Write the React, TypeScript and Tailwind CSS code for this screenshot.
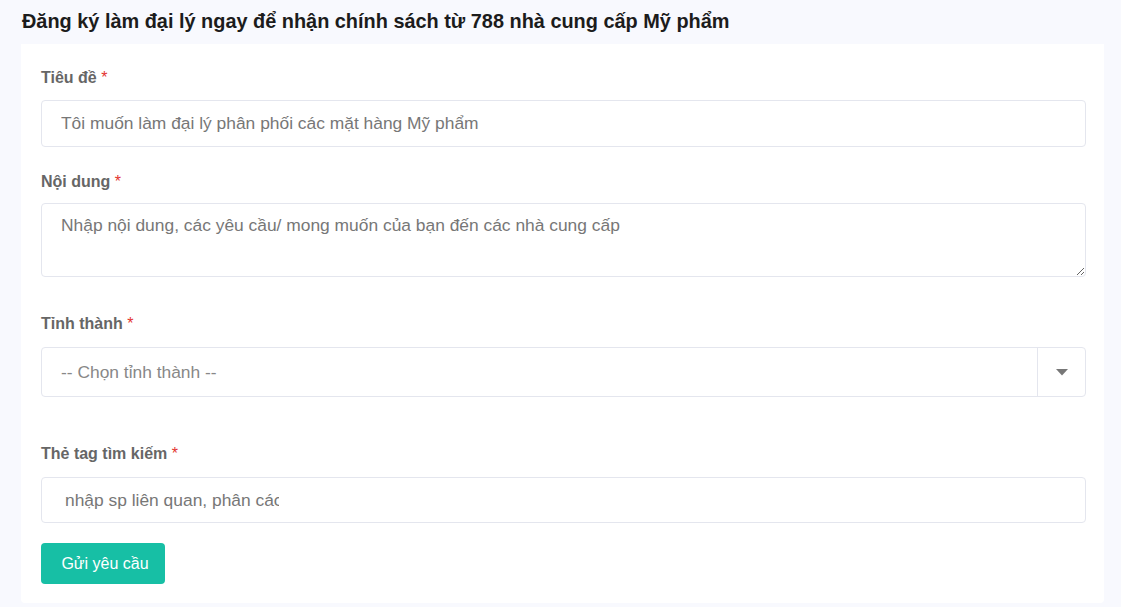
import * as React from "react";

function Label({ text }: { text: string }) {
  return (
    <div className="h-5 text-[16px] font-bold leading-5 text-[#666]">
      {text} <span className="font-normal text-[#e3342f]">*</span>
    </div>
  );
}

export default function App() {
  const box = "w-full rounded-[4px] border border-[#e4e6ee] bg-white outline-none";

  return (
    <div className="min-h-[607px] w-[1121px] bg-[#f8f9fe] font-['Liberation_Sans',Arial,sans-serif]">
      <h1 className="pl-[22px] pt-[11px] text-[19.9px] font-bold leading-5 text-[#1c1c1c]">
        Đăng ký làm đại lý ngay để nhận chính sách từ 788 nhà cung cấp Mỹ phẩm
      </h1>

      <form className="ml-[21px] mt-[13px] w-[1083px] rounded-b-[4px] bg-white pb-[19px] pl-5 pr-[18px] pt-6">
        <Label text="Tiêu đề" />
        <input
          className={`${box} mt-3 h-[47px] px-[19px] text-[17.4px] text-[#666] placeholder:text-[#777]`}
          placeholder="Tôi muốn làm đại lý phân phối các mặt hàng Mỹ phẩm"
        />

        <div className="mt-[25px]">
          <Label text="Nội dung" />
        </div>
        <textarea
          className={`${box} mt-[11px] block h-[74px] px-[19px] py-[11px] text-[17.4px] leading-5 text-[#666] placeholder:text-[#777]`}
          placeholder="Nhập nội dung, các yêu cầu/ mong muốn của bạn đến các nhà cung cấp"
        />

        <div className="mt-[37px]">
          <Label text="Tỉnh thành" />
        </div>
        <div className={`${box} mt-[13px] flex h-[50px] items-stretch`}>
          <div className="flex flex-1 items-center px-[19px] text-[17.4px] text-[#888]">-- Chọn tỉnh thành --</div>
          <div className="flex w-[48px] items-center justify-center border-l border-[#e4e6ee]">
            <svg width="12" height="7" viewBox="0 0 12 7">
              <path d="M0 0h12L6 6.5z" fill="#777" />
            </svg>
          </div>
        </div>

        <div className="mt-[47px]">
          <Label text="Thẻ tag tìm kiếm" />
        </div>
        <div className={`${box} mt-[13px] flex h-[46px] items-center pl-[23px]`}>
          <input
            className="w-[214px] bg-transparent text-[17.4px] text-[#666] outline-none placeholder:text-[#777]"
            placeholder="nhập sp liên quan, phân cách bằng dấu phẩy"
          />
        </div>

        <button
          type="button"
          className="mt-5 h-[41px] w-[124px] rounded-[4px] bg-[#17bfa5] pl-1 text-[16px] text-white"
        >
          Gửi yêu cầu
        </button>
      </form>
    </div>
  );
}
